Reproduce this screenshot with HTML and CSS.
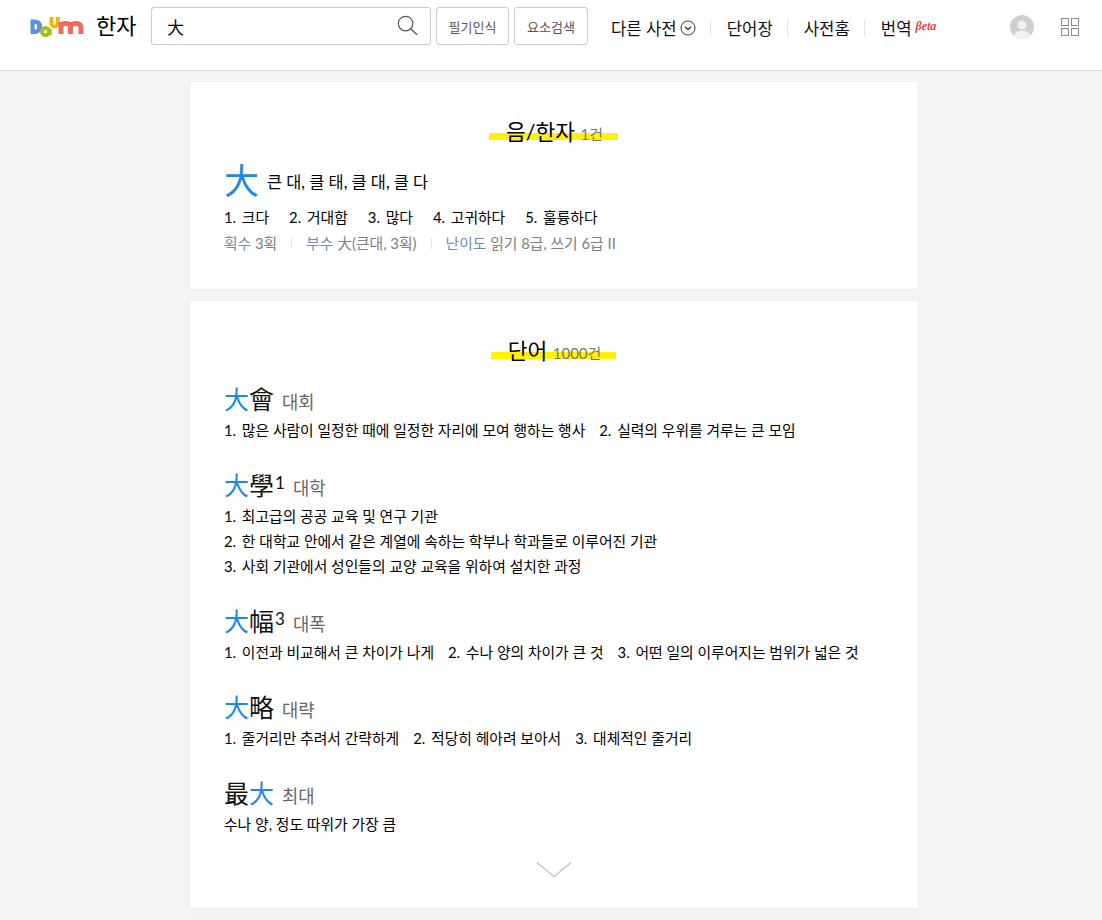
FILE: index.html
```html
<!DOCTYPE html>
<html lang="ko">
<head>
    <meta charset="UTF-8">
    <title>大 - 다음 한자사전</title>
    <link rel="stylesheet" href="styles.css">
</head>
<body>
    <header class="header">
        <a class="logo" href="#">
            <svg width="55" height="21" viewBox="0 0 55 21">
                <path d="M0.5 2.5h4.5a7.2 7.2 0 0 1 0 14.5H0.5z" fill="#5c8df0"/>
                <rect x="4.5" y="7" width="2.5" height="5.5" rx="1" fill="#fff"/>
                <circle cx="15.5" cy="14.5" r="3.6" fill="none" stroke="#a6c20a" stroke-width="3.8"/>
                <path d="M20 12v6" stroke="#a6c20a" stroke-width="3.6"/>
                <path d="M21.5 0v6.5a3.2 3.2 0 0 0 6.4 0V0" fill="none" stroke="#f5b400" stroke-width="3.8"/>
                <path d="M31 17V5M31 10q0-3.5 4.5-3.5t5 3.5v7M40.5 10q0-3.5 5-3.5t5.5 3.5v7" fill="none" stroke="#ee6a5e" stroke-width="5"/>
            </svg>
            <span class="logo-name">한자</span>
        </a>
        <div class="search">
            <span class="search-text">大</span>
            <svg class="search-icon" width="21" height="21" viewBox="0 0 22 22">
                <circle cx="9" cy="9" r="7.6" fill="none" stroke="#555" stroke-width="1.2"/>
                <path d="M14.4 14.4l6.6 6.2" stroke="#555" stroke-width="1.4"/>
            </svg>
        </div>
        <button class="tool-btn btn-hand">필기인식</button>
        <button class="tool-btn btn-part">요소검색</button>
        <nav class="gnb">
            <a href="#">다른 사전
                <svg class="more-icon" width="16" height="16" viewBox="0 0 16 16">
                    <circle cx="8" cy="8" r="7" fill="none" stroke="#333"/>
                    <path d="M5 6.8l3 2.8 3-2.8" fill="none" stroke="#333" stroke-width="1.3"/>
                </svg>
            </a>
            <i class="gnb-bar"></i>
            <a href="#">단어장</a>
            <i class="gnb-bar"></i>
            <a href="#">사전홈</a>
            <i class="gnb-bar"></i>
            <a href="#">번역<em class="beta">βeta</em></a>
        </nav>
        <div class="user">
            <svg class="avatar" width="24" height="24" viewBox="0 0 24 24">
                <defs><clipPath id="avatarClip"><circle cx="12" cy="12" r="12"/></clipPath></defs>
                <circle cx="12" cy="12" r="12" fill="#cfcfcf"/>
                <g clip-path="url(#avatarClip)" fill="#f1f1f1">
                    <circle cx="12" cy="10" r="4.4"/>
                    <ellipse cx="12" cy="21" rx="8" ry="5.5"/>
                </g>
            </svg>
            <svg width="18" height="18" viewBox="0 0 18 18" fill="none" stroke="#8a8a8a">
                <rect x="0.5" y="0.5" width="7" height="7"/>
                <rect x="10.5" y="0.5" width="7" height="7"/>
                <rect x="0.5" y="10.5" width="7" height="7"/>
                <rect x="10.5" y="10.5" width="7" height="7"/>
            </svg>
        </div>
    </header>

    <main class="main">
        <section class="card card-hanja">
            <h2 class="card-title"><span class="mark"><b>음/한자</b> <span class="count">1건</span></span></h2>
            <div class="hanja-head">
                <span class="hanja-big">大</span>
                <span class="hanja-sound">큰 대, 클 태, 클 대, 클 다</span>
            </div>
            <ul class="mean-list">
                <li><span class="num">1.</span> 크다</li>
                <li><span class="num">2.</span> 거대함</li>
                <li><span class="num">3.</span> 많다</li>
                <li><span class="num">4.</span> 고귀하다</li>
                <li><span class="num">5.</span> 훌륭하다</li>
            </ul>
            <div class="hanja-meta">
                <span><b>획수</b> 3획</span>
                <i class="meta-bar"></i>
                <span><b>부수</b> 大(큰대, 3획)</span>
                <i class="meta-bar"></i>
                <span><b>난이도</b> 읽기 8급, 쓰기 6급 II</span>
            </div>
        </section>

        <section class="card card-word">
            <h2 class="card-title"><span class="mark"><b>단어</b> <span class="count">1000건</span></span></h2>

            <div class="word">
                <div class="word-head"><span class="word-hanja"><em>大</em>會</span><span class="word-read">대회</span></div>
                <p class="word-mean"><span><span class="num">1.</span> 많은 사람이 일정한 때에 일정한 자리에 모여 행하는 행사</span><span><span class="num">2.</span> 실력의 우위를 겨루는 큰 모임</span></p>
            </div>
            <div class="word">
                <div class="word-head"><span class="word-hanja"><em>大</em>學<sup>1</sup></span><span class="word-read">대학</span></div>
                <p class="word-line"><span class="num">1.</span> 최고급의 공공 교육 및 연구 기관</p>
                <p class="word-line"><span class="num">2.</span> 한 대학교 안에서 같은 계열에 속하는 학부나 학과들로 이루어진 기관</p>
                <p class="word-line"><span class="num">3.</span> 사회 기관에서 성인들의 교양 교육을 위하여 설치한 과정</p>
            </div>
            <div class="word">
                <div class="word-head"><span class="word-hanja"><em>大</em>幅<sup>3</sup></span><span class="word-read">대폭</span></div>
                <p class="word-mean"><span><span class="num">1.</span> 이전과 비교해서 큰 차이가 나게</span><span><span class="num">2.</span> 수나 양의 차이가 큰 것</span><span><span class="num">3.</span> 어떤 일의 이루어지는 범위가 넓은 것</span></p>
            </div>
            <div class="word">
                <div class="word-head"><span class="word-hanja"><em>大</em>略</span><span class="word-read">대략</span></div>
                <p class="word-mean"><span><span class="num">1.</span> 줄거리만 추려서 간략하게</span><span><span class="num">2.</span> 적당히 헤아려 보아서</span><span><span class="num">3.</span> 대체적인 줄거리</span></p>
            </div>
            <div class="word">
                <div class="word-head"><span class="word-hanja">最<em>大</em></span><span class="word-read">최대</span></div>
                <p class="word-mean"><span>수나 양, 정도 따위가 가장 큼</span></p>
            </div>

            <a class="more-arrow" href="#">
                <svg width="36" height="18" viewBox="0 0 36 18">
                    <path d="M1 1.5l17 14 17-14" fill="none" stroke="#c4c4c4" stroke-width="1.4"/>
                </svg>
            </a>
        </section>

        <section class="card card-next"></section>
    </main>
</body>
</html>
```

FILE: styles.css
```css
html, body { height: 100%; }
body {
    margin: 0;
    background: #f3f4f6;
    color: #000;
    font-family: Lato, "Noto Sans CJK KR", sans-serif;
    overflow: hidden;
}
a { color: inherit; text-decoration: none; }
p, ul, h2 { margin: 0; padding: 0; }
li { list-style: none; }
em, i { font-style: normal; }

.header {
    display: flex;
    height: 70px;
    background: #fff;
    border-bottom: 1px solid #d9dbde;
    align-items: flex-start;
}
.logo {
    display: flex;
    align-items: center;
    width: 151px;
    height: 54px;
    padding: 0 0 0 30px;
    box-sizing: border-box;
}
.logo-name {
    margin-left: 11px;
    font-size: 22px;
    line-height: 30px;
    margin-bottom: 2px;
}
.search {
    display: flex;
    justify-content: space-between;
    align-items: center;
    width: 280px;
    height: 38px;
    margin-top: 7px;
    padding: 0 12px 0 15px;
    box-sizing: border-box;
    border: 1px solid #ccc;
    border-radius: 3px;
}
.search-text { font-size: 17px; }
.search-icon { margin-bottom: 2px; }
.tool-btn {
    height: 38px;
    margin: 7px 0 0 5px;
    padding: 0;
    background: #fff;
    border: 1px solid #ccc;
    border-radius: 3px;
    color: #555;
    font-family: inherit;
    font-size: 13px;
}
.btn-hand { width: 73px; }
.btn-part { width: 74px; }
.gnb {
    display: flex;
    align-items: center;
    height: 55px;
    margin-left: 23px;
    font-size: 16.7px;
    color: #111;
}
.gnb a { display: flex; align-items: center; }
.more-icon { margin-left: 3px; }
.gnb-bar {
    width: 1px;
    height: 16px;
    margin: 0 16px 0 14px;
    background: #e3e3e3;
}
.beta {
    margin: -3px 0 0 4px;
    color: #e2473c;
    font-family: "Liberation Serif", serif;
    font-style: italic;
    font-weight: bold;
    font-size: 12px;
}
.user {
    display: flex;
    align-items: center;
    height: 54px;
    margin-left: auto;
    padding-right: 23px;
}
.avatar { margin-right: 27px; }

.main {
    width: 730px;
    margin: 10px 0 0 189px;
}
.card {
    margin-bottom: 10px;
    padding: 0 34px;
    box-sizing: border-box;
    background: #fff;
    border: 1px solid #eceef0;
}
.card-hanja { height: 209px; padding-top: 35px; }
.card-word { height: 609px; padding-top: 35px; }
.card-next { height: 30px; }

.card-title {
    display: flex;
    justify-content: center;
    font-size: 21.5px;
    font-weight: normal;
    line-height: 30px;
}
.card-title b { font-weight: normal; }
.mark {
    display: block;
    margin-right: 1px;
    padding: 0 15px 0 17px;
    background: linear-gradient(#fff200, #fff200) 0 16px / 100% 7px no-repeat;
}
.count {
    color: #777;
    font-size: 15px;
}

.hanja-head {
    display: flex;
    align-items: center;
    margin-top: 11px;
}
.hanja-big {
    color: #1e88e5;
    font-size: 35px;
    line-height: 40px;
}
.hanja-sound {
    margin-left: 8px;
    padding-top: 2px;
    font-size: 16.4px;
}
.mean-list {
    display: flex;
    gap: 20px;
    margin-top: 5px;
    font-size: 14.8px;
    line-height: 24px;
}
.num { margin-right: 2px; }
.hanja-meta {
    display: flex;
    align-items: center;
    margin-top: 2px;
    color: #808080;
    font-size: 14.8px;
    line-height: 24px;
}
.hanja-meta b { color: #6f8db5; font-weight: normal; }
.meta-bar {
    width: 1px;
    height: 11px;
    margin: 0 14px;
    background: #e3e3e3;
}

.word { margin-bottom: 24px; }
.card-word .card-title { margin-bottom: 13px; }
.word-head {
    display: flex;
    align-items: baseline;
    height: 37px;
    line-height: 36px;
}
.word-hanja { font-size: 25px; color: #111; }
.word-hanja em { color: #1e88e5; }
.word-hanja sup {
    font-size: 17px;
    line-height: 0;
    vertical-align: 6px;
    margin-left: 1px;
}
.word-read {
    margin-left: 8px;
    color: #666;
    font-size: 17.7px;
}
.word-mean, .word-line {
    font-size: 14.8px;
    line-height: 25px;
}
.word-mean { display: flex; gap: 14px; }
.more-arrow {
    display: flex;
    justify-content: center;
    margin-top: 2px;
}
```
